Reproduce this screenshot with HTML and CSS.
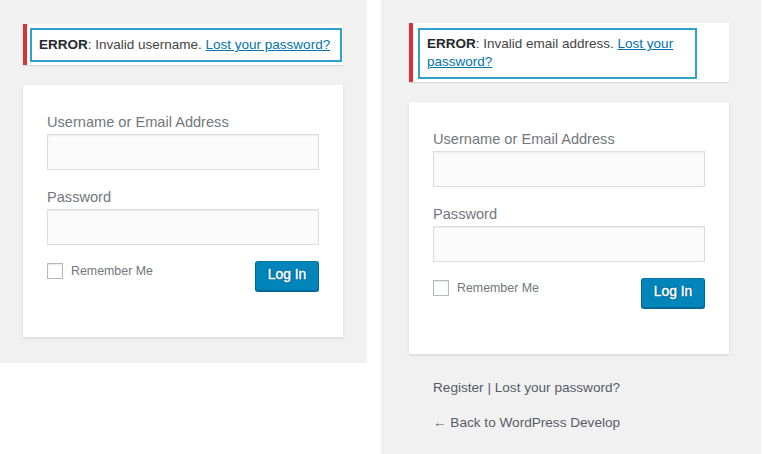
FILE: index.html
```html
<!DOCTYPE html>
<html lang="en">
<head>
<meta charset="utf-8">
<title>Log In</title>
<link rel="stylesheet" href="styles.css">
</head>
<body>
<div class="page">
  <section class="panel panel-left">
    <div class="login">
      <div class="notice">
        <div class="alert"><strong>ERROR</strong>: Invalid username. <a href="#">Lost your password?</a></div>
      </div>
      <form class="form">
        <label class="field-label">Username or Email Address</label>
        <input class="field" type="text">
        <label class="field-label">Password</label>
        <input class="field" type="password">
        <div class="form-row">
          <label class="remember"><span class="checkbox"></span>Remember Me</label>
          <button class="btn" type="button">Log In</button>
        </div>
      </form>
    </div>
  </section>
  <section class="panel panel-right">
    <div class="login">
      <div class="notice notice-tall">
        <div class="alert alert-narrow"><strong>ERROR</strong>: Invalid email address. <a href="#">Lost your password?</a></div>
      </div>
      <form class="form">
        <label class="field-label">Username or Email Address</label>
        <input class="field" type="text">
        <label class="field-label">Password</label>
        <input class="field" type="password">
        <div class="form-row">
          <label class="remember"><span class="checkbox"></span>Remember Me</label>
          <button class="btn" type="button">Log In</button>
        </div>
      </form>
      <p class="nav"><a href="#">Register</a> | <a href="#">Lost your password?</a></p>
      <p class="back"><a href="#">&larr; Back to WordPress Develop</a></p>
    </div>
  </section>
</div>
</body>
</html>
```
FILE: styles.css
```css
* { box-sizing: border-box; }
html, body { margin: 0; padding: 0; background: #fff; }
body {
  font-family: "Liberation Sans", Arial, sans-serif;
  color: #444;
  width: 763px;
  height: 454px;
  overflow: hidden;
}
.page {
  display: flex;
  align-items: flex-start;
  gap: 14px;
}
.panel { background: #f1f1f1; }
.panel-left {
  width: 367px;
  height: 363px;
  padding: 24px 0 0 23px;
}
.panel-right {
  width: 380px;
  height: 454px;
  padding: 23px 0 0 28px;
}
.login { width: 320px; }

.notice {
  background: #fff;
  border-left: 4px solid #dc3232;
  box-shadow: 0 1px 1px 0 rgba(0,0,0,.1);
  padding: 4px 1px 3px 3px;
}
.notice-tall { padding: 5px 1px 3px 5px; }
.alert {
  border: 2px solid #2ea2cc;
  padding: 6px 7px;
  font-size: 13.5px;
  line-height: 18.4px;
  color: #444;
}
.alert-narrow { width: 279px; padding: 5px 7px; }
.alert strong { font-weight: 700; color: #23282d; }
.alert a { color: #0073aa; text-decoration: underline; }

.form {
  margin-top: 20px;
  background: #fff;
  padding: 26px 24px 46px;
  box-shadow: 0 1px 3px rgba(0,0,0,.13);
}
.field-label {
  display: block;
  font-size: 14.6px;
  line-height: 22px;
  color: #72777c;
}
.field {
  display: block;
  width: 272px;
  height: 36px;
  margin: 1px 0 16px;
  border: 1px solid #ddd;
  background: #fbfbfb;
  box-shadow: inset 0 1px 2px rgba(0,0,0,.07);
  outline: none;
}
.form-row {
  display: flex;
  justify-content: space-between;
  align-items: flex-start;
}
.remember {
  display: flex;
  align-items: flex-start;
  font-size: 12.4px;
  line-height: 20px;
  color: #72777c;
}
.checkbox {
  width: 16px;
  height: 16px;
  margin: 2px 8px 0 0;
  border: 1px solid #b4b9be;
  background: #fff;
  box-shadow: inset 0 1px 2px rgba(0,0,0,.1);
}
.btn {
  width: 64px;
  height: 30px;
  padding: 0 0 2px;
  background: #0085ba;
  border: 1px solid #0073aa;
  border-color: #0073aa #006799 #006799;
  border-radius: 3px;
  box-shadow: 0 1px 0 #006799;
  color: #fff;
  font-family: inherit;
  font-size: 13.8px;
  font-weight: 400;
  line-height: 26px;
  -webkit-text-stroke: 0.45px #fff;
  text-shadow: 0 -1px 1px #006799, 1px 0 1px #006799, 0 1px 1px #006799, -1px 0 1px #006799;
}
.nav, .back {
  margin: 24px 0 0;
  padding: 0 24px;
  font-size: 13.6px;
  line-height: 19px;
  color: #555d66;
}
.back { margin-top: 16px; }
.nav a, .back a { color: #555d66; text-decoration: none; }
```
